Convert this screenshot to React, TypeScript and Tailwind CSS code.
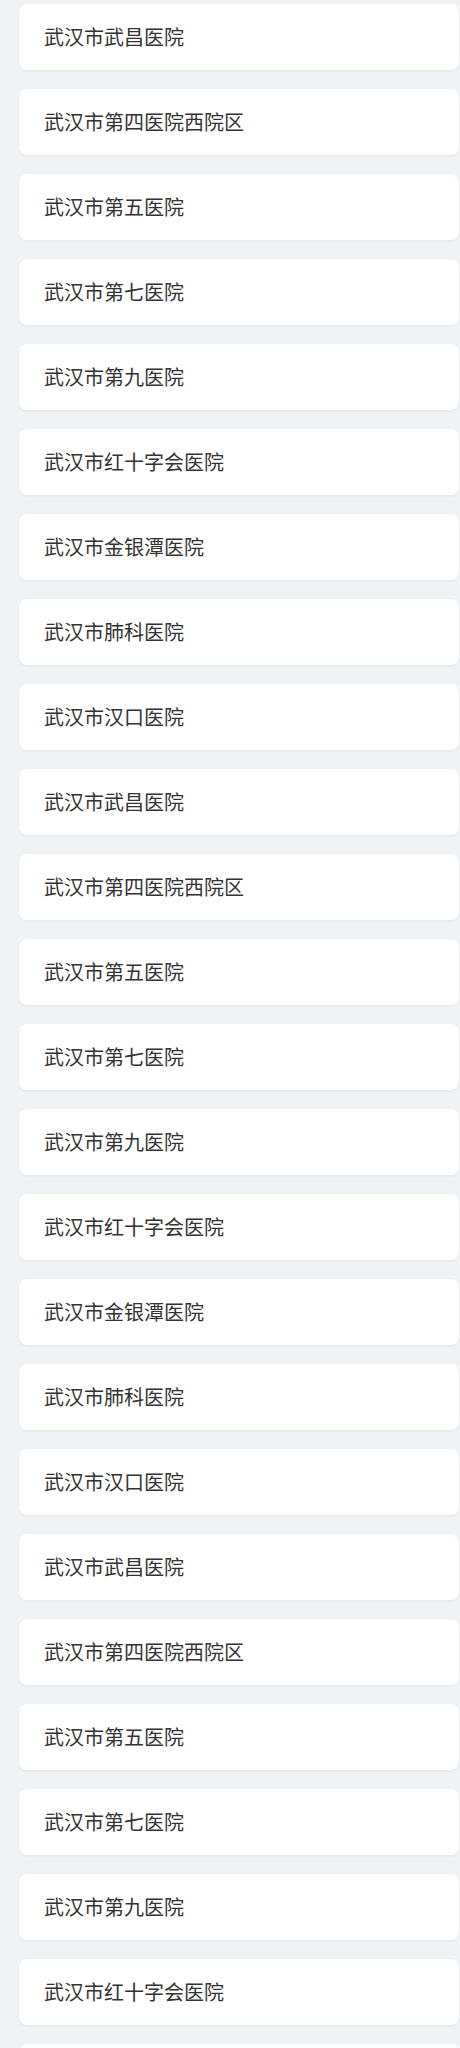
const names = [
  "武汉市武昌医院",
  "武汉市第四医院西院区",
  "武汉市第五医院",
  "武汉市第七医院",
  "武汉市第九医院",
  "武汉市红十字会医院",
  "武汉市金银潭医院",
  "武汉市肺科医院",
  "武汉市汉口医院",
];

const hospitals = [...names, ...names, ...names];

export default function App() {
  return (
    <div
      className="min-h-screen bg-[#eff3f6] pt-[4px] pb-6"
      style={{ fontFamily: '"Microsoft YaHei", "Noto Sans CJK SC", sans-serif' }}
    >
      <ul className="flex flex-col gap-[19px] ml-[19px] mr-[1px]">
        {hospitals.map((name, i) => (
          <li
            key={i}
            className="h-[66px] flex items-center pl-[25px] bg-white rounded-[8px] shadow-[0_1px_3px_rgba(0,0,0,0.06)] text-[20px] text-[#333] cursor-pointer"
          >
            {name}
          </li>
        ))}
      </ul>
    </div>
  );
}
